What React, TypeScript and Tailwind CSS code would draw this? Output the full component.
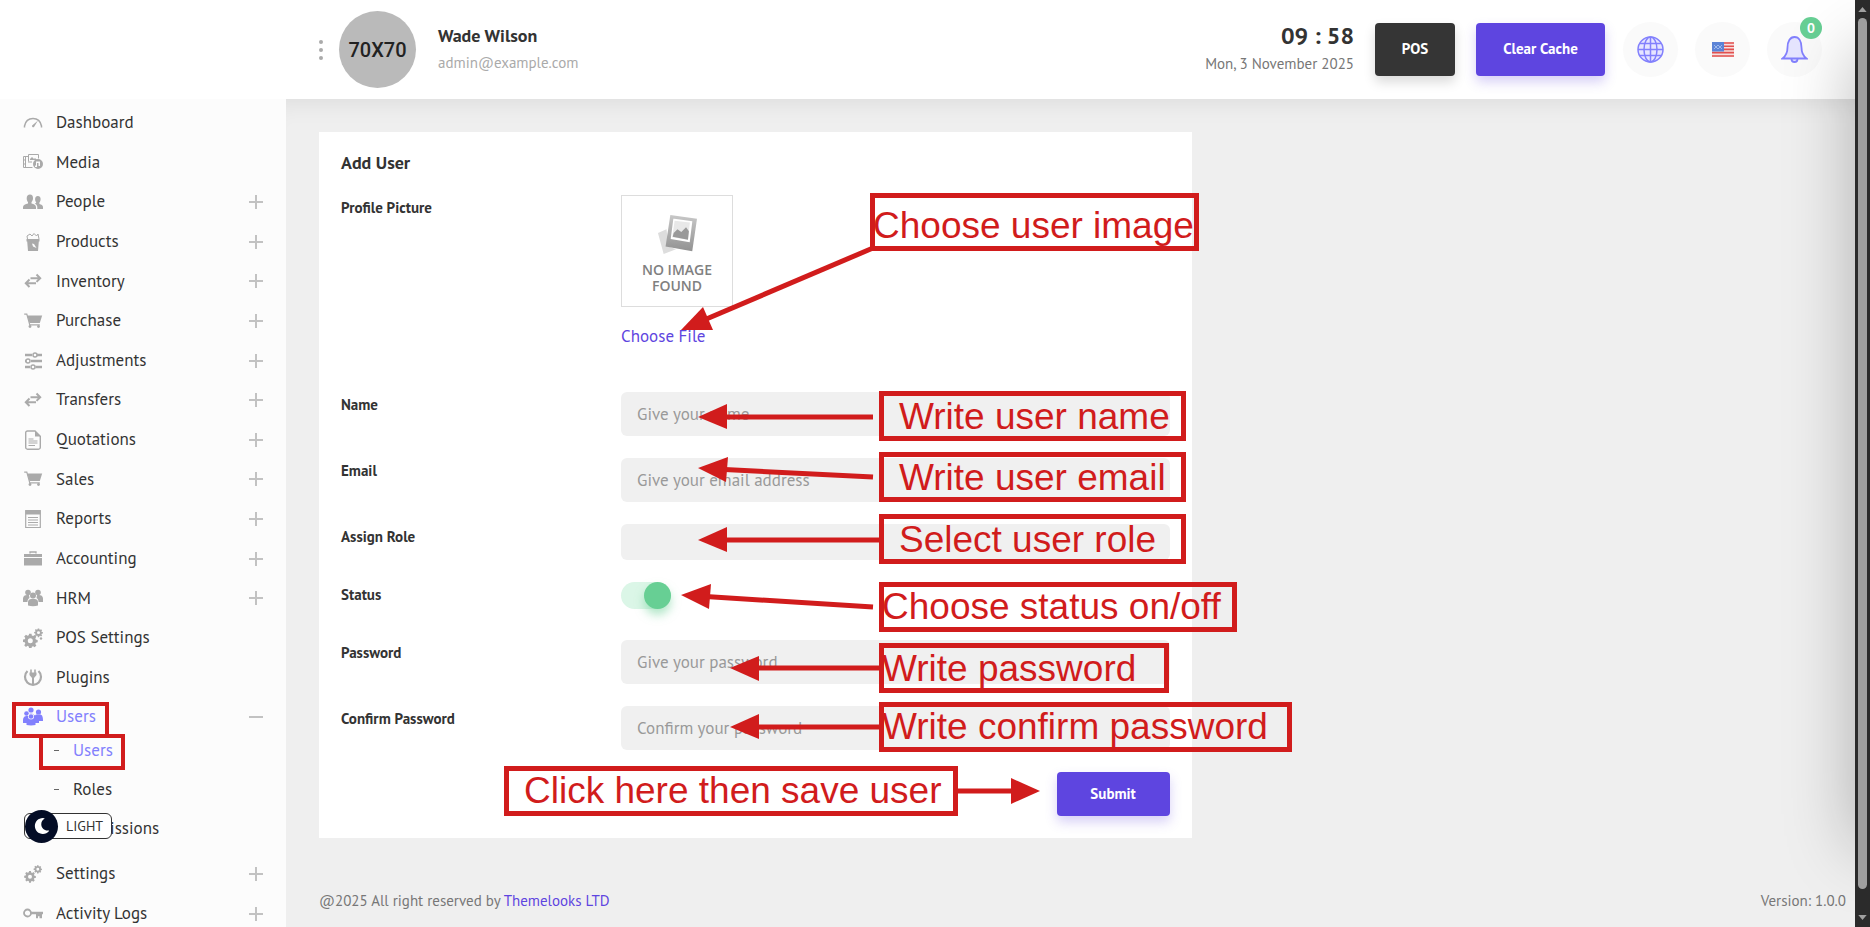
import type { ReactNode } from 'react';
import { FaMoon } from 'react-icons/fa';

type IconProps = { children: ReactNode };

function Icon({ children }: IconProps) {
  return (
    <svg viewBox="0 0 20 20" className="size-5" fill="currentColor" aria-hidden="true">
      {children}
    </svg>
  );
}

const gear = 'M8.400 1h3.200l.4 2.400 1.700.7 2-1.400 2.300 2.300-1.400 2 .7 1.700 2.400.4v3.200l-2.400.4-.7 1.700 1.400 2-2.300 2.300-2-1.400-1.700.7-.4 2.400H8.400L8 17.600l-1.700-.7-2 1.400L2 16l1.400-2-.7-1.700L.3 11.900V8.700l2.400-.4.7-1.700L2 4.600l2.300-2.300 2 1.400L8 3zM10 7a3.300 3.300 0 1 0 0 6.600A3.300 3.300 0 0 0 10 7z';

const DashboardIcon = () => (
  <Icon>
    <path d="M1.500 14.500v-1.500C2.500 8 6 5.500 10 5.500s7.500 2.500 8.500 7.500v1.500" fill="none" stroke="currentColor" strokeWidth="1.500" />
    <path d="M15 7.500L11 14a1.200 1.200 0 0 1-1.900-1.400z" />
  </Icon>
);

const MediaIcon = () => (
  <Icon>
    <path d="M5 4.500H.5v11h9M2.500 4.500v11M.5 8h2M.5 12h2M5 10h4" fill="none" stroke="currentColor" />
    <path d="M5.500 9.500v-7h10v4" fill="none" stroke="currentColor" />
    <path d="M7 7l2-2 2 2 1-1 2 2H7z" />
    <path d="M15 7a5 5 0 1 0 0 10 5 5 0 0 0 0-10zm2 2.500v4.500h-1.500v-3h-1.500V15h-2v-1.500h1v-4z" fillRule="evenodd" />
  </Icon>
);

const PeopleIcon = () => (
  <Icon>
    <path d="M7 2.500c2 0 3.200 1.500 3 4-.1 1.700-.8 2.800-1.500 3.500v1.500c2.500.8 4.500 1.500 4.500 3.500v2H0v-2c0-2 2.500-2.700 5-3.500V10C4.200 9.300 3.800 8.200 3.700 6.500c-.1-2.500 1.300-4 3.300-4z" />
    <path d="M14.800 4c2 0 3 1.400 2.800 3.500-.1 1.400-.6 2.300-1.200 3V12c2 .6 3.600 1.300 3.600 3v2h-5.700v-2c0-1.800-1-2.800-2.500-3.600l1.300-.4v-.8c-.5-.6-1-1.500-1-2.700C12 5.400 13 4 14.800 4z" />
  </Icon>
);

const ProductsIcon = () => (
  <Icon>
    <path d="M4.500 7L4 4l3-2 2 2 2-2.500L13.500 4 15 2l1 5" fill="none" stroke="currentColor" />
    <path d="M3.500 7h13v2.500h-.7L15 19H5l-.8-9.500h-.7zM9 11.500l1 3 3.500 1.500-2.500-4z" fillRule="evenodd" />
  </Icon>
);

const SwapIcon = () => (
  <Icon>
    <path d="M7.500 7.200H17M13.500 3.500l3.700 3.700-3.700 3.700M13 12.200H3M6.500 8.500l-3.700 3.700L6.500 16" fill="none" stroke="currentColor" strokeWidth="2" />
  </Icon>
);

const CartIcon = () => (
  <Icon>
    <path d="M1.200 3.200h2.600l3 10.600h10" fill="none" stroke="currentColor" strokeWidth="1.200" />
    <path d="M4.200 4.500h15L16.800 12H6.400z" />
    <circle cx="7" cy="15.500" r="1.400" />
    <circle cx="15.500" cy="15.500" r="1.400" />
  </Icon>
);

const SlidersIcon = () => (
  <Icon>
    <path d="M2 4h7M14 4h5M2 10h1M8 10h11M2 16h5M12.500 16H19" stroke="currentColor" strokeWidth="2.400" />
    <g fill="none" stroke="currentColor" strokeWidth="1.500">
      <circle cx="12" cy="4" r="2" />
      <circle cx="5" cy="10" r="2" />
      <circle cx="10" cy="16" r="2" />
    </g>
  </Icon>
);

const QuotationIcon = () => (
  <Icon>
    <path d="M4.500 1H12l5.300 5.300v11a1.800 1.800 0 0 1-1.800 1.900h-11a1.800 1.800 0 0 1-1.800-1.900V2.800A1.800 1.800 0 0 1 4.500 1z" fill="none" stroke="currentColor" strokeWidth="1.400" />
    <path d="M12 1v5.500h5.500z" />
    <path d="M5.500 9h5M5.500 11h9M5.500 13h9M5.500 15.500h6.500" stroke="currentColor" strokeWidth="1.100" />
  </Icon>
);

const ReportIcon = () => (
  <Icon>
    <path d="M2.700 1.500h14.600v17H2.700zM5 8.500h10M5 11h10M5 13.500h10M5 16h10" fill="none" stroke="currentColor" strokeWidth="1.200" />
    <path d="M2.500 2h15v3.500h-15z" />
  </Icon>
);

const BriefcaseIcon = () => (
  <Icon>
    <path d="M7 4.500V3h6v1.500" fill="none" stroke="currentColor" strokeWidth="1.300" />
    <path d="M1 5h18v3H1zM1 9h18v7.500H1z" />
  </Icon>
);

const GroupIcon = () => (
  <Icon>
    <circle cx="5" cy="4.500" r="2.800" />
    <circle cx="15" cy="4.500" r="2.800" />
    <path d="M0 14v-3.500C0 8 2 7 4 7h2l.5 3c-1.500 1-2 2-2 4zM20 14v-3.500C20 8 18 7 16 7h-2l-.5 3c1.500 1 2 2 2 4z" />
    <circle cx="10" cy="7.500" r="3" />
    <path d="M5 17.500V14c0-2.500 2-3.200 5-3.200s5 .7 5 3.200v3.500c-3 1-7 1-10 0z" />
  </Icon>
);

const UsersIcon = () => (
  <Icon>
    <circle cx="8" cy="3" r="2.600" />
    <circle cx="3.500" cy="6.500" r="2.300" />
    <circle cx="15.500" cy="5" r="2.600" />
    <path d="M0 14c0-4 1.500-5 4-5h2V7.500C6.500 6 9.500 6 10.500 7.500l1.500 1 1-1h4c2 0 3 2 3 6.500h-4v2H0z" />
    <circle cx="8" cy="9.500" r="3" fill="#fcfcfc" />
    <circle cx="8" cy="9.500" r="2.300" />
    <path d="M3.500 18v-2.500c0-2 2-2.700 4.500-2.700s4.500.7 4.500 2.700V18c-2.500.6-6.500.6-9 0z" />
  </Icon>
);

const GearsIcon = () => (
  <Icon>
    <g transform="translate(-.3 5) scale(.76)"><path d={gear} fillRule="evenodd" /></g>
    <g transform="translate(11 0) scale(.45)"><path d={gear} fillRule="evenodd" /></g>
    <circle cx="18" cy="10.500" r="1.200" />
  </Icon>
);

const SettingsIcon = () => (
  <Icon>
    <g transform="translate(1 6.500) scale(.6)"><path d={gear} fillRule="evenodd" /></g>
    <g transform="translate(10.500 .8) scale(.43)"><path d={gear} fillRule="evenodd" /></g>
  </Icon>
);

const PlugIcon = () => (
  <Icon>
    <path d="M4.500 3a8 8 0 1 0 11 0" fill="none" stroke="currentColor" strokeWidth="2.200" />
    <path d="M8 1.500V5M12 1.500V5" stroke="currentColor" strokeWidth="1.600" />
    <path d="M10 8v8" stroke="currentColor" strokeWidth="2" />
    <path d="M6.500 4.500h7V7L11 10H9L6.500 7z" />
  </Icon>
);

const KeyIcon = () => (
  <Icon>
    <circle cx="4.500" cy="9" r="3.500" fill="none" stroke="currentColor" strokeWidth="1.800" />
    <path d="M8 7.800h12v2.400h-1v4h-2.500v-2H15v2h-2v-4H8z" />
  </Icon>
);

type Item = { label: string; icon: ReactNode; more?: boolean; open?: boolean };

const menu: Item[] = [
  { label: 'Dashboard', icon: <DashboardIcon /> },
  { label: 'Media', icon: <MediaIcon /> },
  { label: 'People', icon: <PeopleIcon />, more: true },
  { label: 'Products', icon: <ProductsIcon />, more: true },
  { label: 'Inventory', icon: <SwapIcon />, more: true },
  { label: 'Purchase', icon: <CartIcon />, more: true },
  { label: 'Adjustments', icon: <SlidersIcon />, more: true },
  { label: 'Transfers', icon: <SwapIcon />, more: true },
  { label: 'Quotations', icon: <QuotationIcon />, more: true },
  { label: 'Sales', icon: <CartIcon />, more: true },
  { label: 'Reports', icon: <ReportIcon />, more: true },
  { label: 'Accounting', icon: <BriefcaseIcon />, more: true },
  { label: 'HRM', icon: <GroupIcon />, more: true },
  { label: 'POS Settings', icon: <GearsIcon /> },
  { label: 'Plugins', icon: <PlugIcon /> },
  { label: 'Users', icon: <UsersIcon />, open: true },
];

const bottomMenu: Item[] = [
  { label: 'Settings', icon: <SettingsIcon />, more: true },
  { label: 'Activity Logs', icon: <KeyIcon />, more: true },
];

function MenuItem({ label, icon, more, open }: Item) {
  return (
    <li className="flex">
      <a href="#" className={open ? 'flex flex-1 items-center px-[23px] text-[#8280fd]' : 'flex flex-1 items-center px-[23px] text-[#333]'}>
        <span className={open ? 'flex w-5 justify-center' : 'flex w-5 justify-center text-[#aaa]'}>{icon}</span>
        <span className="ml-[13px] flex-1">{label}</span>
        {(more || open) && (
          <svg viewBox="0 0 14 14" className="size-3.5 text-[#c2c2c2]" stroke="currentColor" strokeWidth="2" aria-hidden="true">
            <path d={more ? 'M0 7h14M7 0v14' : 'M0 7h14'} />
          </svg>
        )}
      </a>
    </li>
  );
}

function Sidebar() {
  return (
    <aside className="w-[286px] shrink-0 overflow-hidden bg-[#fcfcfc] pt-1 text-[17px]">
      <nav>
        <ul className="grid h-[634px] auto-rows-fr">
          {menu.map((item) => (
            <MenuItem key={item.label} {...item} />
          ))}
        </ul>
        <ul className="-mt-1.5 mb-1.5 grid auto-rows-[39px] pl-[54px]">
          {['Users', 'Roles', 'Permissions'].map((label, i) => (
            <li key={label} className="flex items-center text-[#333]">
              <span className="h-px w-[5px] bg-[#666]" />
              <a href="#" className={i === 0 ? 'ml-3.5 text-[#8280fd]' : 'ml-3.5'}>{label}</a>
            </li>
          ))}
        </ul>
        <ul className="grid auto-rows-[40px]">
          {bottomMenu.map((item) => (
            <MenuItem key={item.label} {...item} />
          ))}
        </ul>
      </nav>
    </aside>
  );
}

function Header() {
  return (
    <header className="relative z-10 flex h-[99px] shrink-0 items-center bg-white pr-[33px] pl-[319px]">
      <button type="button" aria-label="Toggle menu" className="flex flex-col gap-1">
        <span className="size-1 rounded-full bg-[#aaa]" />
        <span className="size-1 rounded-full bg-[#aaa]" />
        <span className="size-1 rounded-full bg-[#aaa]" />
      </button>
      <div className="ml-4 flex size-[77px] items-center justify-center rounded-full bg-[#bababa] font-['Roboto',sans-serif] text-xl font-medium text-[#222]">
        70X70
      </div>
      <div className="ml-[22px] flex-1">
        <p className="text-lg leading-7 font-bold text-[#333]">Wade Wilson</p>
        <p className="mb-0.5 text-[15px] leading-[26px] text-[#aaa]">admin@example.com</p>
      </div>
      <div className="text-right">
        <p className="text-2xl leading-7 font-bold text-[#333]">09 : 58</p>
        <p className="text-[15px] leading-7 text-[#777]">Mon, 3 November 2025</p>
      </div>
      <button type="button" className="ml-[21px] h-[53px] w-20 rounded bg-[#353535] text-[15px] font-bold text-white shadow-[0_6px_12px_rgba(0,0,0,0.15)]">
        POS
      </button>
      <button type="button" className="ml-[21px] h-[53px] w-[129px] rounded bg-[#5e45e0] text-[15px] font-bold text-white shadow-[0_6px_12px_rgba(94,69,224,0.25)]">
        Clear Cache
      </button>
      <div className="ml-[18px] flex gap-[17px]">
        <button type="button" aria-label="Visit site" className="flex size-[55px] items-center justify-center rounded-full bg-[#fafafa]">
          <svg viewBox="0 0 27 27" className="size-[27px]" fill="#e6e5ff" stroke="#8280fd" strokeWidth="1.500">
            <circle cx="13.500" cy="13.500" r="12.500" />
            <ellipse cx="13.500" cy="13.500" rx="6.500" ry="12.500" />
            <path d="M13.500 1v25M1 13.500h25M3 7.500h21M3 19.500h21" fill="none" />
          </svg>
        </button>
        <button type="button" aria-label="Language" className="flex size-[55px] items-center justify-center rounded-full bg-[#fafafa]">
          <svg viewBox="0 0 22 15" className="h-[15px] w-[22px]">
            <path d="M0 0h22v15H0z" fill="#f6dede" />
            <path d="M0 1h22M0 4.200h22M0 7.400h22M0 10.600h22M0 14h22" stroke="#e2504e" strokeWidth="1.600" />
            <path d="M0 0h12v9.500H0z" fill="#5b83d6" />
            <path d="M2 3l2 2 2-2 2 2 2-2M2 7l2-2 2 2 2-2 2 2" fill="none" stroke="#9db8ec" />
          </svg>
        </button>
        <button type="button" aria-label="Notifications" className="relative flex size-[55px] items-center justify-center rounded-full bg-[#fafafa]">
          <svg viewBox="0 0 27 27" className="size-[27px]" fill="#e6e5ff" stroke="#8280fd" strokeWidth="1.800">
            <path d="M10.500 23a3 3 0 0 0 6 0" />
            <path d="M1.500 22.500c4-3 5-6 5-11 0-6 2.500-10.500 7-10.500s7 4.500 7 10.500c0 5 1 8 5 11z" />
          </svg>
          <span className="absolute -top-[5px] right-0 flex size-[22px] items-center justify-center rounded-full bg-[#67cf94] text-sm font-bold text-white">0</span>
        </button>
      </div>
    </header>
  );
}

type FieldProps = { id: string; label: string; children: ReactNode };

function Field({ id, label, children }: FieldProps) {
  return (
    <div className="flex items-start">
      <label htmlFor={id} className="w-[280px] shrink-0 text-[15px] leading-[26px] font-bold text-[#333]">{label}</label>
      <div className="flex-1">{children}</div>
    </div>
  );
}

const inputClass = 'block h-11 w-full rounded-md bg-[#f0f0f0] px-4 text-[17px] text-[#333] placeholder:text-[#999]';

function UserForm() {
  return (
    <form className="w-4/7 bg-white px-[22px] pt-[19px] pb-[22px]">
      <h1 className="text-lg leading-6 font-bold text-[#333]">Add User</h1>
      <div className="mt-5 grid gap-[22px]">
        <Field id="picture" label="Profile Picture">
          <div className="flex size-28 flex-col items-center border border-[#ddd] pt-[18px]">
            <svg viewBox="0 0 42 42" className="size-10" aria-hidden="true">
              <defs>
                <linearGradient id="photo" x1="0" y1="0" x2="0" y2="1">
                  <stop offset="0" stopColor="#c8c8c8" />
                  <stop offset="1" stopColor="#929292" />
                </linearGradient>
              </defs>
              <path d="M1 20l9-4 2 18 8 3-13 5z" fill="#ddd" />
              <path d="M14 1l28 4-5 34-28-5z" fill="url(#photo)" />
              <path d="M18 6l18 2.500-2.500 20-18-3z" fill="#fff" stroke="#fff" strokeWidth="2" />
              <path d="M18.500 7l16 2-2 18-16.500-2.500z" fill="#e8e8e8" />
              <path d="M16.500 24l1-4 4-4 4 3 5-5 3 4-1 9z" fill="#999" />
            </svg>
            <p className="mt-2 text-center font-['Open_Sans',sans-serif] text-sm leading-4 font-semibold text-[#808080]">
              NO IMAGE
              <br />
              FOUND
            </p>
          </div>
          <label htmlFor="picture" className="mt-[17px] block h-[46px] text-[17px] leading-6 text-[#5e45e0]">Choose File</label>
          <input id="picture" type="file" className="sr-only" />
        </Field>
        <Field id="name" label="Name">
          <input id="name" type="text" placeholder="Give your name" className={inputClass} />
        </Field>
        <Field id="email" label="Email">
          <input id="email" type="email" placeholder="Give your email address" className={inputClass} />
        </Field>
        <Field id="role" label="Assign Role">
          <select id="role" className="block h-9 w-full appearance-none rounded-md bg-[#f0f0f0] px-4" />
        </Field>
        <Field id="status" label="Status">
          <div className="flex h-9 items-start">
            <input
              id="status"
              type="checkbox"
              defaultChecked
              className="h-[27px] w-[50px] appearance-none rounded-full bg-[#dbf6e7] before:ml-[23px] before:block before:size-[27px] before:rounded-full before:bg-[#67cf94] before:shadow-[0_6px_10px_rgba(103,207,148,0.5)]"
            />
          </div>
        </Field>
        <Field id="password" label="Password">
          <input id="password" type="password" placeholder="Give your password" className={inputClass} />
        </Field>
        <Field id="confirm" label="Confirm Password">
          <input id="confirm" type="password" placeholder="Confirm your password" className={inputClass} />
        </Field>
        <button type="submit" className="h-11 w-[113px] justify-self-end rounded bg-[#5e45e0] text-[15px] font-bold text-white shadow-[0_6px_12px_rgba(94,69,224,0.25)]">
          Submit
        </button>
      </div>
    </form>
  );
}

const notes = [
  { text: 'Choose user image', box: 'left-[870px] top-[193px] w-[329px] h-[58px] pt-2 pl-[3px]' },
  { text: 'Write user name', box: 'left-[879px] top-[391px] w-[307px] h-[50px] pt-0.5 pl-5' },
  { text: 'Write user email', box: 'left-[879px] top-[452px] w-[307px] h-[50px] pt-0.5 pl-5' },
  { text: 'Select user role', box: 'left-[879px] top-[514px] w-[307px] h-[50px] pt-0.5 pl-5' },
  { text: 'Choose status on/off', box: 'left-[879px] top-[582px] w-[358px] h-[50px] pl-[3px]' },
  { text: 'Write password', box: 'left-[879px] top-[643px] w-[290px] h-[50px] pt-0.5 pl-[3px]' },
  { text: 'Write confirm password', box: 'left-[879px] top-[702px] w-[413px] h-[50px] pl-[3px]' },
  { text: 'Click here then save user', box: 'left-[504px] top-[766px] w-[454px] h-[50px] pl-5' },
];

const arrows = [
  { line: 'M873 248L697 323', head: 'M681 330L703 307L713 330z' },
  { line: 'M873 417H715', head: 'M698 417L727 404V429z' },
  { line: 'M873 477L715 469', head: 'M698 468L728 457L726 482z' },
  { line: 'M880 540H715', head: 'M698 540L727 527V552z' },
  { line: 'M873 607L698 596', head: 'M681 595L711 584L709 609z' },
  { line: 'M880 668H747', head: 'M730 668L759 656V681z' },
  { line: 'M880 727H747', head: 'M730 727L759 714V739z' },
  { line: 'M958 791H1023', head: 'M1040 791L1011 778V804z' },
];

// Guide marks drawn over the page
function Walkthrough() {
  return (
    <div className="pointer-events-none absolute inset-0 z-20 overflow-hidden">
      <svg className="absolute inset-0 size-full" fill="#d11c1c" stroke="#d11c1c" aria-hidden="true">
        {arrows.map(({ line, head }) => (
          <g key={line}>
            <path d={line} strokeWidth="5" />
            <path d={head} stroke="none" />
          </g>
        ))}
      </svg>
      <div className="absolute top-[702px] left-3 h-9 w-[97px] border-4 border-[#d11c1c]" />
      <div className="absolute top-[734px] left-[39px] h-9 w-[86px] border-4 border-[#d11c1c]" />
      {notes.map(({ text, box }) => (
        <p
          key={text}
          className={`absolute flex items-center font-['Liberation_Sans',sans-serif] text-[37px] whitespace-nowrap text-[#d11c1c] outline-5 -outline-offset-5 outline-[#d11c1c] ${box}`}
        >
          {text}
        </p>
      ))}
    </div>
  );
}

function Scrollbar() {
  return (
    <div className="z-30 flex w-[15px] shrink-0 flex-col items-center justify-between bg-[#2b2b2b] py-[7px]">
      <svg viewBox="0 0 10 6" className="h-[5px] w-[9px]" fill="#a0a0a0"><path d="M5 0l5 6H0z" /></svg>
      <div className="mt-1.5 mb-[26px] w-[9px] flex-1 rounded-full bg-[#9f9f9f]" />
      <svg viewBox="0 0 10 6" className="h-[5px] w-[9px]" fill="#a0a0a0"><path d="M5 6L0 0h10z" /></svg>
    </div>
  );
}

export default function App() {
  return (
    <div className="relative flex h-screen overflow-hidden bg-[#efefef] font-['PT_Sans','Lato',sans-serif] text-base">
      <div className="relative flex min-w-0 flex-1 flex-col overflow-hidden">
        <Header />
        <div className="flex min-h-0 flex-1">
          <Sidebar />
          <main className="flex flex-1 flex-col shadow-[inset_0_24px_24px_-20px_rgba(0,0,0,0.08)]">
            <div className="pt-[33px] pr-[9px] pl-[33px]">
              <UserForm />
            </div>
            <footer className="mt-auto flex justify-between pr-[9px] pb-3.5 pl-[33px] text-[15px] leading-6 text-[#777]">
              <p>
                @2025 All right reserved by <a href="#" className="text-[#5e45e0]">Themelooks LTD</a>
              </p>
              <p>Version: 1.0.0</p>
            </footer>
          </main>
        </div>
        <div className="pointer-events-none absolute top-12 bottom-20 left-full z-10 w-20 shadow-[0_0_70px_rgba(0,0,0,0.28)]" />
        <button type="button" className="absolute bottom-[88px] left-6 z-10 flex h-[26px] w-[88px] items-center rounded-md border border-[#333] bg-white text-sm text-[#333]">
          <span className="flex size-[33px] items-center justify-center rounded-full bg-[#040d26] text-white">
            <FaMoon className="size-4" />
          </span>
          <span className="ml-2">LIGHT</span>
        </button>
      </div>
      <Scrollbar />
      <Walkthrough />
    </div>
  );
}
